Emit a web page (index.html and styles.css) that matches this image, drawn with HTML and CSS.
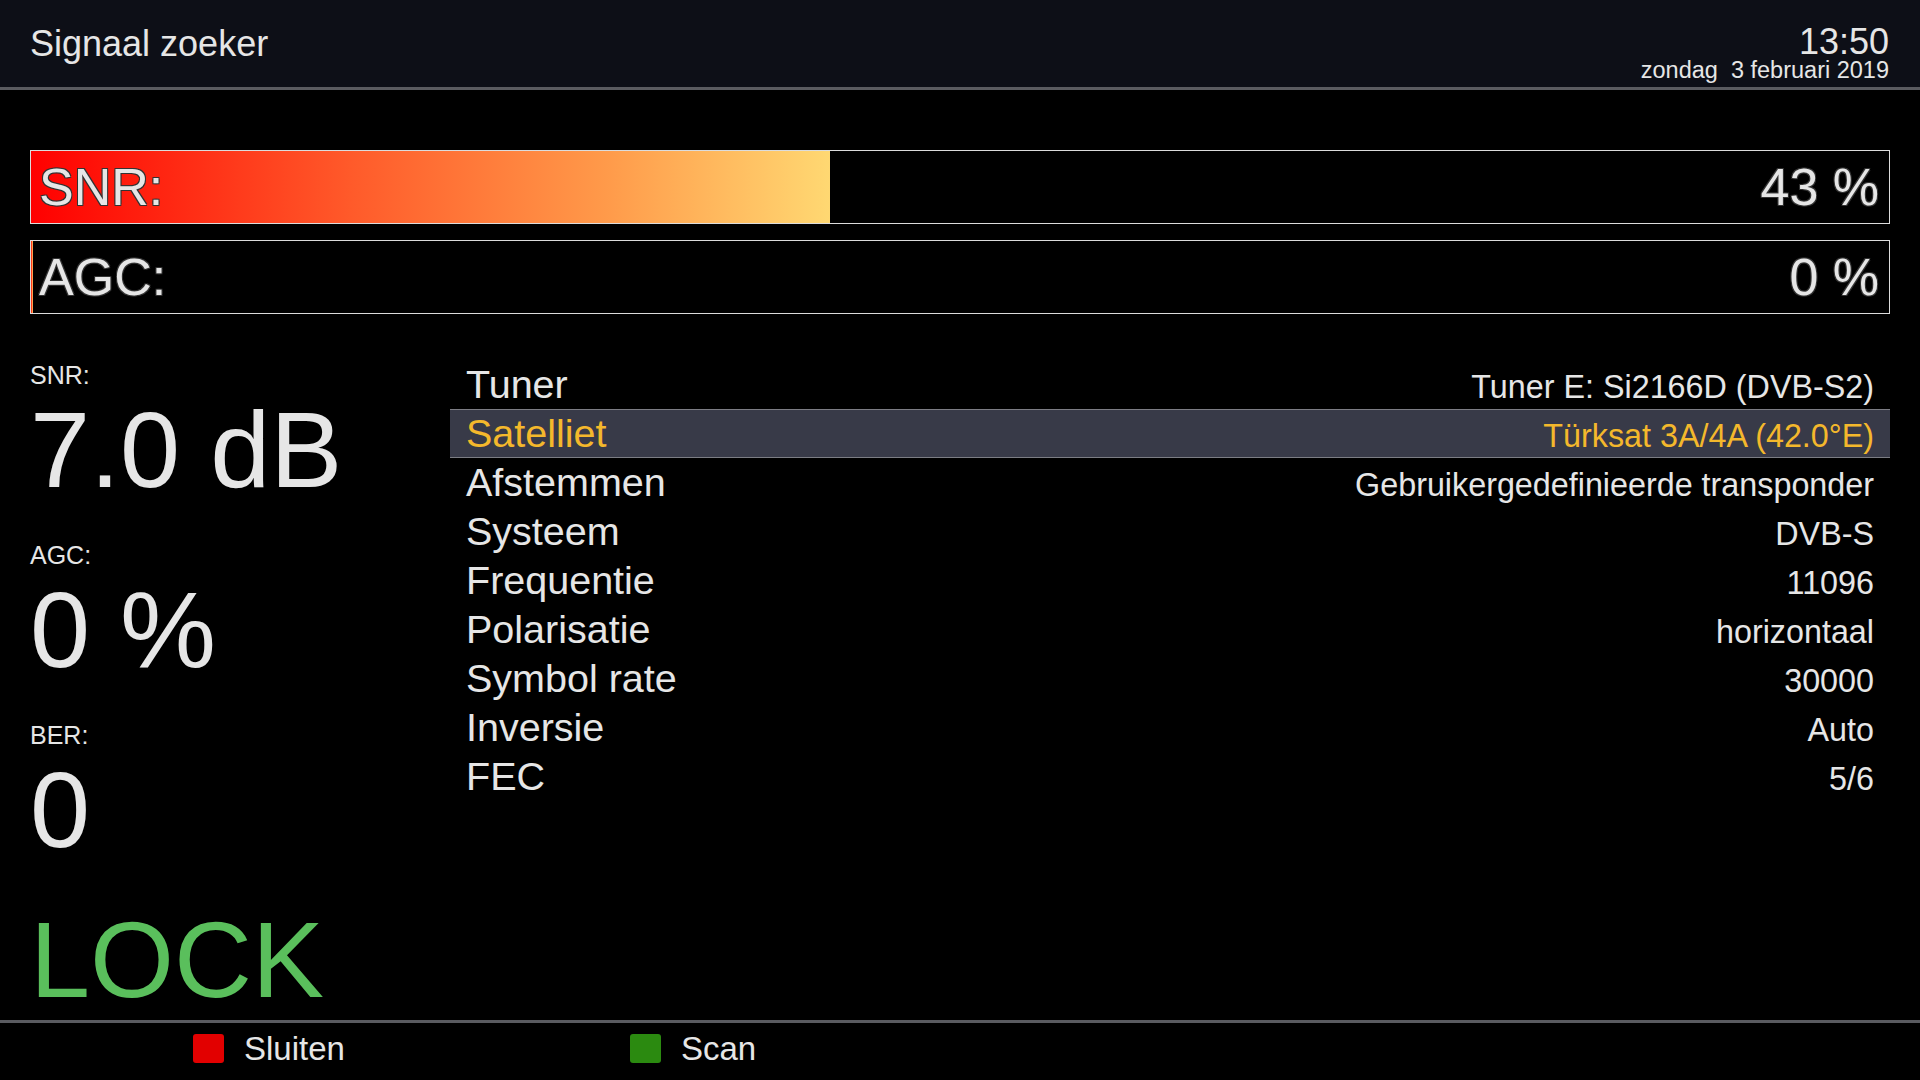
FILE: index.html
```html
<!DOCTYPE html>
<html lang="nl">
<head>
    <meta charset="UTF-8">
    <meta name="viewport" content="width=device-width, initial-scale=1.0">
    <title>Signaal zoeker</title>
    <link rel="stylesheet" href="styles.css">
</head>
<body>

    <div class="screen">
        <div class="header">
            <div class="title">Signaal zoeker</div>
            <div class="clock">
                <div class="time">13:50</div>
                <div class="date">zondag&nbsp; 3 februari 2019</div>
            </div>
        </div>

        <div class="main">
            <div class="bar">
                <div class="bar-fill" style="width: 43%"></div>
                <div class="bar-text">
                    <span>SNR:</span>
                    <span>43 %</span>
                </div>
            </div>
            <div class="bar">
                <div class="bar-fill" style="width: 0%"></div>
                <div class="bar-text">
                    <span>AGC:</span>
                    <span>0 %</span>
                </div>
            </div>

            <div class="details">
                <div class="levels">
                    <div class="level">
                        <div class="level-label">SNR:</div>
                        <div class="level-value">7.0 dB</div>
                    </div>
                    <div class="level">
                        <div class="level-label">AGC:</div>
                        <div class="level-value">0 %</div>
                    </div>
                    <div class="level">
                        <div class="level-label">BER:</div>
                        <div class="level-value">0</div>
                    </div>
                    <div class="lock">LOCK</div>
                </div>

                <div class="list">
                    <div class="row"><span class="key">Tuner</span><span class="val">Tuner E: Si2166D (DVB-S2)</span></div>
                    <div class="row selected"><span class="key">Satelliet</span><span class="val">Türksat 3A/4A (42.0°E)</span></div>
                    <div class="row"><span class="key">Afstemmen</span><span class="val">Gebruikergedefinieerde transponder</span></div>
                    <div class="row"><span class="key">Systeem</span><span class="val">DVB-S</span></div>
                    <div class="row"><span class="key">Frequentie</span><span class="val">11096</span></div>
                    <div class="row"><span class="key">Polarisatie</span><span class="val">horizontaal</span></div>
                    <div class="row"><span class="key">Symbol rate</span><span class="val">30000</span></div>
                    <div class="row"><span class="key">Inversie</span><span class="val">Auto</span></div>
                    <div class="row"><span class="key">FEC</span><span class="val">5/6</span></div>
                </div>
            </div>
        </div>

        <div class="footer">
            <div class="button"><span class="color-key red"></span>Sluiten</div>
            <div class="button"><span class="color-key green"></span>Scan</div>
        </div>
    </div>

</body>
</html>
```

FILE: styles.css
```css
body {
    margin: 0;
    padding: 0;
    background-color: #000;
    color: #e6e6e6;
    font-family: "Liberation Sans", Arial, sans-serif;
}
.screen {
    width: 1920px;
    height: 1080px;
    display: flex;
    flex-direction: column;
    overflow: hidden;
}
.header {
    height: 62px;
    padding: 25px 31px 0 30px;
    background-color: #0d0f17;
    border-bottom: 3px solid #5a5b60;
    display: flex;
    justify-content: space-between;
    align-items: flex-start;
}
.title {
    font-size: 36px;
    line-height: 38px;
}
.clock {
    text-align: right;
}
.time {
    font-size: 36px;
    line-height: 33px;
}
.date {
    font-size: 23.5px;
    line-height: 25px;
}
.main {
    flex: 1;
    padding: 60px 30px 0 30px;
}
.bar {
    position: relative;
    height: 74px;
    box-sizing: border-box;
    border: 1px solid #dcdcdc;
    margin-bottom: 16px;
}
.bar-fill {
    position: absolute;
    top: 0;
    left: 0;
    bottom: 0;
    min-width: 2px;
    background: linear-gradient(to right, #ff0000, #ff5a2a 40%, #ff9a4a 72%, #ffd872);
}
.bar-text {
    position: relative;
    height: 100%;
    display: flex;
    justify-content: space-between;
    align-items: center;
    padding: 0 10px 0 8px;
    font-size: 52px;
    line-height: 1;
    text-shadow: -1px -1px 0 #333, 1px -1px 0 #333, -1px 1px 0 #333, 1px 1px 0 #333;
}
.details {
    display: flex;
    margin-top: 46px;
}
.levels {
    width: 420px;
    display: flex;
    flex-direction: column;
    gap: 30px;
}
.level-label {
    font-size: 25px;
    line-height: 30px;
}
.level-value {
    font-size: 108px;
    line-height: 120px;
}
.lock {
    font-size: 108px;
    line-height: 120px;
    color: #5abf5c;
}
.list {
    flex: 1;
}
.row {
    height: 49px;
    box-sizing: border-box;
    padding: 0 16px;
    display: flex;
    justify-content: space-between;
    align-items: baseline;
}
.key {
    font-size: 39.5px;
    line-height: 49px;
}
.val {
    font-size: 32.3px;
}
.row.selected {
    background-color: #383a48;
    border-top: 1px solid #7c7d84;
    border-bottom: 1px solid #7c7d84;
    color: #f4b82c;
}
.row.selected .key {
    line-height: 47px;
}
.footer {
    height: 51px;
    border-top: 3px solid #5a5b60;
    padding: 0 0 6px 193px;
    display: flex;
    align-items: center;
}
.button {
    width: 437px;
    display: flex;
    align-items: center;
    font-size: 33px;
}
.color-key {
    width: 31px;
    height: 29px;
    border-radius: 3px;
    margin-right: 20px;
}
.color-key.red {
    background-color: #e20000;
}
.color-key.green {
    background-color: #2b8a10;
}
```
